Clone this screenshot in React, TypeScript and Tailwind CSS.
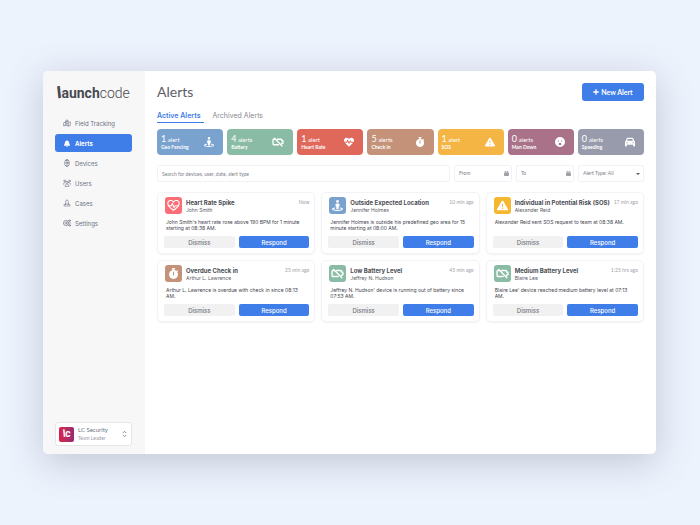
import type { ComponentType, SVGProps } from "react";
import { clsx } from "clsx";
import {
  FaBell,
  FaCalendarDays,
  FaCar,
  FaFaceSurprise,
  FaHeartPulse,
  FaStopwatch,
  FaStreetView,
  FaTriangleExclamation,
} from "react-icons/fa6";

type Icon = ComponentType<SVGProps<SVGSVGElement>>;

const BatteryOff = (props: SVGProps<SVGSVGElement>) => (
  <svg viewBox="0 0 24 24" fill="none" stroke="currentColor" strokeWidth="2.6" strokeLinejoin="round" strokeLinecap="round" {...props}>
    <path d="M6 6.500H3.500A1.500 1.500 0 0 0 2 8v8a1.500 1.500 0 0 0 1.500 1.500H13" />
    <path d="M10.500 6.500H18A1.500 1.500 0 0 1 19.500 8v1.500H22v5h-2.500V16" />
    <path d="M5 4.500L20 20" />
  </svg>
);

const HeartLine = (props: SVGProps<SVGSVGElement>) => (
  <svg viewBox="0 0 24 24" fill="none" stroke="currentColor" strokeWidth="2" strokeLinejoin="round" strokeLinecap="round" {...props}>
    <path d="M12 21C8 18 1.500 13.500 1.500 8.500A5.500 5.500 0 0 1 12 6a5.500 5.500 0 0 1 10.500 2.500C22.500 13.500 16 18 12 21z" />
    <path d="M2.500 12.500H8l2-4 3 7.500 2-3.500h6.500" />
  </svg>
);

const PlusIcon = (props: SVGProps<SVGSVGElement>) => (
  <svg viewBox="0 0 12 12" fill="none" stroke="currentColor" strokeWidth="2.6" strokeLinecap="round" {...props}>
    <path d="M6 1.500v9M1.500 6h9" />
  </svg>
);

const lineProps = {
  viewBox: "0 0 24 24",
  fill: "none",
  stroke: "currentColor",
  strokeWidth: 1.8,
  strokeLinejoin: "round",
  strokeLinecap: "round",
} as const;

const MapPinIcon = (props: SVGProps<SVGSVGElement>) => (
  <svg {...lineProps} {...props}>
    <path d="M8 9L2 11.500V21l6-2 8 2 6-2V9l-5 1.500M8 9v10M16 14v7" />
    <path d="M12 15s-4-4.500-4-8a4 4 0 0 1 8 0c0 3.500-4 8-4 8z" />
    <circle cx="12" cy="7" r="1" />
  </svg>
);

const DeviceIcon = (props: SVGProps<SVGSVGElement>) => (
  <svg {...lineProps} {...props}>
    <rect x="5" y="4" width="14" height="16" rx="5" />
    <path d="M8 4l1-2h6l1 2M8 20l1 2h6l1-2" />
    <circle cx="12" cy="12" r="3.500" />
    <path d="M12 10.500V12h1.500" />
  </svg>
);

const UsersIcon = (props: SVGProps<SVGSVGElement>) => (
  <svg {...lineProps} {...props}>
    <circle cx="12" cy="10" r="3.500" />
    <path d="M6 21c0-4 2.500-5.500 6-5.500s6 1.500 6 5.500z" />
    <circle cx="4.500" cy="6" r="2.500" />
    <circle cx="19.500" cy="6" r="2.500" />
    <path d="M1 16c0-3 1.500-4.500 4.500-4.500M23 16c0-3-1.500-4.500-4.500-4.500" />
  </svg>
);

const CaseIcon = (props: SVGProps<SVGSVGElement>) => (
  <svg {...lineProps} {...props}>
    <path d="M8 16V7a4 4 0 0 1 8 0v9" />
    <path d="M8 14l-5 3v4h18v-4l-5-3M8 16h8" />
  </svg>
);

const SettingsIcon = (props: SVGProps<SVGSVGElement>) => (
  <svg {...lineProps} {...props}>
    <circle cx="8.500" cy="12" r="7.500" strokeDasharray="3.500 1" />
    <circle cx="8.500" cy="12" r="3" />
    <circle cx="20" cy="5" r="2.500" />
    <circle cx="20" cy="19" r="2.500" />
    <path d="M16 12h7M17.500 5H14M17.500 19H14" />
  </svg>
);

const navItems: { label: string; icon: Icon; active?: boolean }[] = [
  { label: "Field Tracking", icon: MapPinIcon },
  { label: "Alerts", icon: FaBell, active: true },
  { label: "Devices", icon: DeviceIcon },
  { label: "Users", icon: UsersIcon },
  { label: "Cases", icon: CaseIcon },
  { label: "Settings", icon: SettingsIcon },
];

const stats: { count: number; label: string; icon: Icon; color: string }[] = [
  { count: 1, label: "Geo Fencing", icon: FaStreetView, color: "bg-[#7aa2cf]" },
  { count: 4, label: "Battery", icon: BatteryOff, color: "bg-[#8abba5]" },
  { count: 1, label: "Heart Rate", icon: FaHeartPulse, color: "bg-[#e0685b]" },
  { count: 5, label: "Check in", icon: FaStopwatch, color: "bg-[#c49279]" },
  { count: 1, label: "SOS", icon: FaTriangleExclamation, color: "bg-[#f4b545]" },
  { count: 0, label: "Man Down", icon: FaFaceSurprise, color: "bg-[#a97288]" },
  { count: 0, label: "Speeding", icon: FaCar, color: "bg-[#979bac]" },
];

const alerts: { title: string; person: string; time: string; text: string; icon: Icon; color: string }[] = [
  {
    title: "Heart Rate Spike",
    person: "John Smith",
    time: "Now",
    text: "John Smith's heart rate rose above 190 BPM for 1 minute starting at 08:38 AM.",
    icon: HeartLine,
    color: "bg-[#fb6d77]",
  },
  {
    title: "Outside Expected Location",
    person: "Jennifer Holmes",
    time: "10 min ago",
    text: "Jennifer Holmes is outside his predefined geo area for 15 minute starting at 08:00 AM.",
    icon: FaStreetView,
    color: "bg-[#7aa2cf]",
  },
  {
    title: "Individual in Potential Risk (SOS)",
    person: "Alexander Reid",
    time: "17 min ago",
    text: "Alexander Reid sent SOS request to team at 08:38 AM.",
    icon: FaTriangleExclamation,
    color: "bg-[#f5b72f]",
  },
  {
    title: "Overdue Check in",
    person: "Arthur L. Lawrence",
    time: "25 min ago",
    text: "Arthur L. Lawrence is overdue with check in since 08:13 AM.",
    icon: FaStopwatch,
    color: "bg-[#c49279]",
  },
  {
    title: "Low Battery Level",
    person: "Jeffrey N. Hudson",
    time: "45 min ago",
    text: "Jeffrey N. Hudson' device is running out of battery since 07:53 AM.",
    icon: BatteryOff,
    color: "bg-[#8abba5]",
  },
  {
    title: "Medium Battery Level",
    person: "Blaire Lee",
    time: "1:25 hrs ago",
    text: "Blaire Lee' device reached medium battery level at 07:13 AM.",
    icon: BatteryOff,
    color: "bg-[#8abba5]",
  },
];

const Sidebar = () => (
  <aside className="flex w-[102px] shrink-0 flex-col bg-[#f7f7f8] pt-3 pr-[13px] pb-2 pl-3">
    <a href="#" className="flex h-5 items-center pl-0.5 font-[Roboto] text-[14px] leading-5 text-[#4a4b50]">
      <span className="inline-block -rotate-6 text-[16px] font-black">l</span>
      <span className="font-bold">aunch</span>
      <span className="font-light">code</span>
    </a>

    <nav className="mt-[11px] flex flex-col gap-0.5 font-[Inter]">
      {navItems.map(({ label, icon: NavIcon, active }) => (
        <a
          key={label}
          href="#"
          className={clsx(
            "flex h-[18px] items-center gap-1 rounded-[3px] pl-2 text-[6px]",
            active ? "bg-[#3f7de8] font-bold text-white" : "text-[#6b7180]"
          )}
        >
          <NavIcon className={active ? "h-[7px] w-2" : "size-2"} />
          {label}
        </a>
      ))}
    </nav>

    {/* Account switcher */}
    <button className="mt-auto flex h-6 items-center gap-1 rounded-[3px] border border-[#e6e6e9] bg-white px-[3px] text-left">
      <span className="flex size-[15px] items-center justify-center rounded-[2px] bg-gradient-to-r from-[#dc1f42] to-[#962a76] font-[Roboto] text-[10px] leading-none text-white">
        <span className="-rotate-6 font-bold">l</span>
        <span className="font-bold">c</span>
      </span>
      <span className="flex-1 text-[6px] leading-[8px] text-[#6b7180]">
        LC Security
        <span className="block text-[5px] text-[#9a9ea8]">Team Leader</span>
      </span>
      <svg viewBox="0 0 8 12" className="h-2 w-[7px]" fill="none" stroke="#6b7180" strokeWidth="1.200">
        <path d="M1.500 4.500L4 2l2.500 2.500M1.500 7.500L4 10l2.500-2.500" />
      </svg>
    </button>
  </aside>
);

const DateField = ({ label }: { label: string }) => (
  <label className="flex h-[17px] w-[58px] items-center rounded-[2px] border border-[#f1f2f8] pr-0.5 pl-1 text-[#7b7e88]">
    <input type="text" placeholder={label} aria-label={label} className="w-0 flex-1 text-[5px] outline-none placeholder:text-[#7b7e88]" />
    <FaCalendarDays className="size-[5px]" />
  </label>
);

export default function App() {
  return (
    <div className="flex min-h-screen bg-[#edf3fd] py-[71px] pr-[44px] pl-[43px] font-[Lato,sans-serif]">
      <div className="flex flex-1 overflow-hidden rounded-[5px] bg-white shadow-[0_8px_36px_rgba(90,100,120,0.3)]">
        <Sidebar />

        <main className="min-w-0 flex-1 px-3 pt-3">
          <header className="flex items-center justify-between">
            <h1 className="text-[14px] leading-[18px] text-[#5b5d66]">Alerts</h1>
            <button className="flex h-[18px] w-[62px] items-center justify-center gap-0.5 rounded-[3px] bg-[#3f7de8] text-[7px] font-bold text-white">
              <PlusIcon className="size-[6px]" />
              New Alert
            </button>
          </header>

          <div className="mt-2 flex gap-2 font-[Inter] text-[7px] leading-[13px]">
            <button className="border-b border-[#3f7de8] pr-1 font-semibold text-[#3f7de8]">Active Alerts</button>
            <button className="border-b border-transparent text-[#85878f]">Archived Alerts</button>
          </div>

          <div className="mt-[6px] grid grid-cols-7 gap-1">
            {stats.map(({ count, label, icon: StatIcon, color }) => (
              <div key={label} className={clsx("flex h-[26px] items-center justify-between rounded-[4px] pr-[9px] pl-1 text-white", color)}>
                <div>
                  <p className="text-[6px] leading-[9px]">
                    <span className="text-[9px]">{count}</span> {count === 1 ? "alert" : "alerts"}
                  </p>
                  <p className="text-[5px] leading-[7px] font-bold">{label}</p>
                </div>
                <StatIcon className={StatIcon === BatteryOff ? "size-3" : "size-[10px]"} />
              </div>
            ))}
          </div>

          <div className="mt-[10px] flex gap-1">
            <input
              type="search"
              aria-label="Search alerts"
              placeholder="Search for devices, user, date, alert type"
              className="h-[17px] min-w-0 flex-1 rounded-[2px] border border-[#f1f2f8] px-1 text-[5px] outline-none placeholder:text-[#7b7e88]"
            />
            <DateField label="From" />
            <DateField label="To" />
            <div className="relative flex w-[66px]">
              <select aria-label="Alert type" className="h-[17px] w-full appearance-none rounded-[2px] border border-[#f1f2f8] px-1 text-[5px] text-[#7b7e88]">
                <option>Alert Type: All</option>
              </select>
              <svg viewBox="0 0 8 4" className="pointer-events-none absolute top-2 right-1 h-0.5 w-1" fill="#55575f">
                <path d="M0 0h8L4 4z" />
              </svg>
            </div>
          </div>

          <div className="mt-[10px] grid grid-cols-3 gap-[6px] font-[Inter,sans-serif]">
            {alerts.map(({ title, person, time, text, icon: AlertIcon, color }) => (
              <article key={title} className="flex h-[62px] flex-col rounded-[5px] border border-[#f3f3f5] pt-1 pr-[5px] pb-[5px] pl-[6px] shadow-[0_1px_2px_rgba(0,0,0,0.06)]">
                <div className="flex gap-1 pl-px">
                  <span className={clsx("flex size-[17px] shrink-0 items-center justify-center rounded-[3px] text-white", color)}>
                    <AlertIcon className={AlertIcon === BatteryOff || AlertIcon === HeartLine ? "size-[13px]" : "size-[11px]"} />
                  </span>
                  <div className="min-w-0 flex-1 pt-0.5">
                    <h2 className="text-[6px] leading-[8px] font-bold whitespace-nowrap text-[#4a4c53]">{title}</h2>
                    <p className="text-[5px] leading-[6px] text-[#5b5d66]">{person}</p>
                  </div>
                  <time className="pt-0.5 font-[Lato] text-[5px] leading-[6px] whitespace-nowrap text-[#a0a2a8]">{time}</time>
                </div>
                <p className="mt-[5px] pr-1 pl-0.5 text-[5px] leading-[6px] text-[#44464d]">{text}</p>
                <div className="mt-auto flex gap-1 text-[6px] font-medium">
                  <button className="h-3 flex-1 rounded-[2px] bg-[#f1f1f2] text-[#74767d]">Dismiss</button>
                  <button className="h-3 flex-1 rounded-[2px] bg-[#3f7de8] text-white">Respond</button>
                </div>
              </article>
            ))}
          </div>
        </main>
      </div>
    </div>
  );
}
